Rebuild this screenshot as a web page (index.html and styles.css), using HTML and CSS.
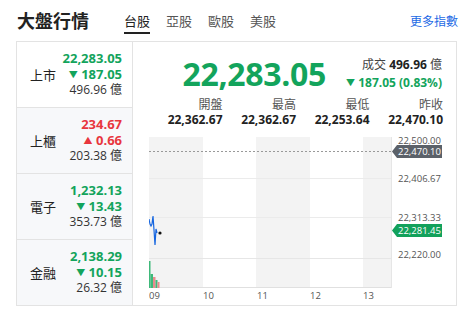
FILE: index.html
```html
<!DOCTYPE html>
<html lang="zh-Hant">
<head>
    <meta charset="UTF-8">
    <meta name="viewport" content="width=device-width, initial-scale=1.0">
    <title>大盤行情</title>
    <link rel="stylesheet" href="styles.css">
</head>
<body>
    <header class="top-bar">
        <h1 class="title">大盤行情</h1>
        <nav class="tabs">
            <a class="tab active">台股</a>
            <a class="tab">亞股</a>
            <a class="tab">歐股</a>
            <a class="tab">美股</a>
        </nav>
        <a class="more-link">更多指數</a>
    </header>

    <main class="market-box">
        <!-- 左側: 各類指數 -->
        <ul class="index-list">
            <li class="index-row selected">
                <span class="index-name">上市</span>
                <div class="index-values">
                    <div class="price down">22,283.05</div>
                    <div class="change down"><span class="arrow">▼</span> 187.05</div>
                    <div class="volume">496.96 億</div>
                </div>
            </li>
            <li class="index-row">
                <span class="index-name">上櫃</span>
                <div class="index-values">
                    <div class="price up">234.67</div>
                    <div class="change up"><span class="arrow">▲</span> 0.66</div>
                    <div class="volume">203.38 億</div>
                </div>
            </li>
            <li class="index-row">
                <span class="index-name">電子</span>
                <div class="index-values">
                    <div class="price down">1,232.13</div>
                    <div class="change down"><span class="arrow">▼</span> 13.43</div>
                    <div class="volume">353.73 億</div>
                </div>
            </li>
            <li class="index-row">
                <span class="index-name">金融</span>
                <div class="index-values">
                    <div class="price down">2,138.29</div>
                    <div class="change down"><span class="arrow">▼</span> 10.15</div>
                    <div class="volume">26.32 億</div>
                </div>
            </li>
        </ul>

        <!-- 右側: 詳細 -->
        <section class="detail">
            <div class="quote">
                <div class="big-price">22,283.05</div>
                <div class="quote-side">
                    <div class="turnover">成交 <b>496.96</b> 億</div>
                    <div class="big-change"><span class="arrow">▼</span> 187.05 (0.83%)</div>
                </div>
            </div>

            <div class="stats">
                <div class="stat"><span class="stat-label">開盤</span><span class="stat-value">22,362.67</span></div>
                <div class="stat"><span class="stat-label">最高</span><span class="stat-value">22,362.67</span></div>
                <div class="stat"><span class="stat-label">最低</span><span class="stat-value">22,253.64</span></div>
                <div class="stat"><span class="stat-label">昨收</span><span class="stat-value">22,470.10</span></div>
            </div>

            <svg class="chart" width="300" height="166" viewBox="0 0 300 166">
                <!-- 時間帯の背景 -->
                <rect x="0" y="0" width="54" height="151" fill="#f3f3f3"/>
                <rect x="107" y="0" width="54" height="151" fill="#f3f3f3"/>
                <rect x="214" y="0" width="28" height="151" fill="#f3f3f3"/>

                <!-- グリッド -->
                <line x1="0" y1="41.5" x2="242" y2="41.5" stroke="#ebebeb"/>
                <line x1="0" y1="80.5" x2="242" y2="80.5" stroke="#ebebeb"/>
                <line x1="0" y1="121.5" x2="242" y2="121.5" stroke="#e6e6e6"/>
                <line x1="0" y1="150.5" x2="242" y2="150.5" stroke="#e0e0e0"/>
                <line x1="242.5" y1="0" x2="242.5" y2="151" stroke="#e6e6e6"/>

                <!-- 昨收ライン -->
                <line x1="0" y1="14.5" x2="242" y2="14.5" stroke="#999" stroke-dasharray="2 2"/>

                <!-- 成交量 -->
                <rect x="0" y="124" width="1.5" height="27" fill="#3fb97a"/>
                <rect x="1.5" y="137" width="2.5" height="14" fill="#3fb97a"/>
                <rect x="4" y="140" width="2.5" height="11" fill="#e98b8e"/>
                <rect x="6.5" y="143" width="2" height="8" fill="#3fb97a"/>
                <rect x="8.5" y="145" width="2" height="6" fill="#e98b8e"/>

                <!-- 走勢 -->
                <polyline points="0,82 1,87 2,89 3,87 4,79 5,93 6,108 7,92 8,96" fill="none" stroke="#1565e0" stroke-width="1.2"/>
                <circle cx="11" cy="96" r="1.6" fill="#111"/>

                <!-- Y軸 -->
                <text class="axis" x="249" y="7">22,500.00</text>
                <text class="axis" x="249" y="45">22,406.67</text>
                <text class="axis" x="249" y="84">22,313.33</text>
                <text class="axis" x="249" y="121">22,220.00</text>

                <!-- 価格タグ -->
                <path d="M243 14.5 L248 8 H293 V21 H248 Z" fill="#5b6169"/>
                <text class="tag" x="249" y="18">22,470.10</text>
                <path d="M243 93.5 L248 87 H293 V100 H248 Z" fill="#12a15b"/>
                <text class="tag" x="249" y="97">22,281.45</text>

                <!-- X軸 -->
                <text class="axis" x="0" y="162">09</text>
                <text class="axis" x="54" y="162">10</text>
                <text class="axis" x="108" y="162">11</text>
                <text class="axis" x="161" y="162">12</text>
                <text class="axis" x="214" y="162">13</text>
            </svg>
        </section>
    </main>
</body>
</html>
```

FILE: styles.css
```css
body {
    margin: 0;
    padding: 0;
    font-family: 'Open Sans', 'Noto Sans CJK TC', sans-serif;
    color: #222;
    background-color: white;
}

.top-bar {
    display: flex;
    align-items: center;
    height: 41px;
    padding: 0 5px 0 17px;
}

.title {
    margin: 0;
    font-size: 18px;
    font-weight: 700;
    font-family: 'Noto Sans CJK TC', sans-serif;
    line-height: 41px;
}

.tabs {
    display: flex;
    gap: 16px;
    margin-left: 35px;
    height: 41px;
}

.tab {
    position: relative;
    font-size: 13px;
    font-family: 'Noto Sans CJK TC', sans-serif;
    color: #555;
    line-height: 41px;
}

.tab.active {
    color: #222;
}

.tab.active::after {
    content: '';
    position: absolute;
    left: 0;
    right: 0;
    bottom: 7px;
    height: 2px;
    background-color: #222;
}

.more-link {
    margin-left: auto;
    font-size: 12px;
    font-family: 'Noto Sans CJK TC', sans-serif;
    color: #1d6ae5;
}

.market-box {
    display: flex;
    width: 439px;
    margin-left: 16px;
    border: 1px solid #e3e3e3;
}

.index-list {
    width: 115px;
    margin: 0;
    padding: 0;
    list-style: none;
    border-right: 1px solid #e3e3e3;
}

.index-row {
    display: flex;
    align-items: center;
    justify-content: space-between;
    height: 65px;
    padding: 0 10px 0 13px;
    background-color: #f7f8fa;
    border-bottom: 1px solid #e3e3e3;
}

.index-row:last-child {
    border-bottom: none;
}

.index-row.selected {
    background-color: white;
}

.index-name {
    font-size: 13px;
    font-family: 'Noto Sans CJK TC', sans-serif;
}

.index-values {
    text-align: right;
    line-height: 15.5px;
}

.price,
.change {
    font-size: 13px;
    font-weight: 700;
}

.volume {
    font-size: 12px;
    color: #333;
}

.down {
    color: #13a45c;
}

.up {
    color: #e8363e;
}

.arrow {
    font-size: 9px;
    vertical-align: 1px;
}

.detail {
    flex: 1;
    padding-left: 16px;
}

.quote {
    display: flex;
    justify-content: flex-end;
    align-items: center;
    gap: 20px;
    height: 38px;
    margin-top: 13px;
    padding-right: 14px;
}

.big-price {
    font-size: 32px;
    font-weight: 700;
    color: #13a45c;
    line-height: 38px;
    letter-spacing: -0.3px;
}

.quote-side {
    text-align: right;
    line-height: 18px;
    font-size: 12px;
}

.turnover {
    color: #444;
}

.turnover b {
    color: #222;
}

.big-change {
    color: #13a45c;
    font-weight: 700;
}

.stats {
    display: grid;
    grid-template-columns: repeat(4, 1fr);
    width: 294px;
    margin-top: 3px;
}

.stat {
    display: flex;
    flex-direction: column;
    align-items: flex-end;
    line-height: 16px;
}

.stat-label {
    font-size: 12px;
    color: #555;
    font-family: 'Noto Sans CJK TC', sans-serif;
}

.stat-value {
    font-size: 12px;
    font-weight: 700;
}

.chart {
    display: block;
    margin-top: 9px;
}

.axis {
    font-family: 'Open Sans', sans-serif;
    font-size: 9.5px;
    fill: #555;
}

.tag {
    font-family: 'Open Sans', sans-serif;
    font-size: 9.5px;
    fill: white;
}
```
